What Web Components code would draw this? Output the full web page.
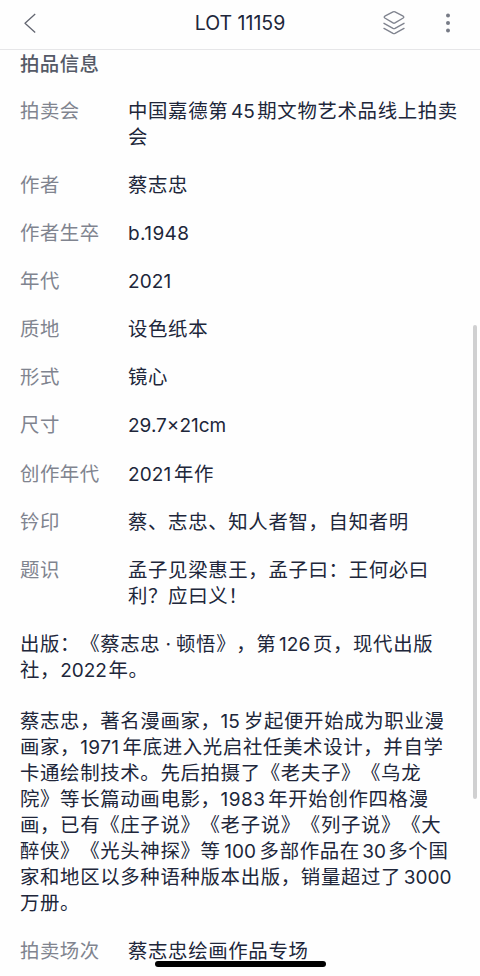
<!DOCTYPE html>
<html lang="zh-CN">
<head>
<meta charset="utf-8">
<title>LOT 11159</title>
<style>
html,body{margin:0;height:100%;overflow:hidden;background:#fefefe}
body{font-family:Inter,"Noto Sans CJK SC",sans-serif;color:#20263a}
</style>
</head>
<body>
<lot-page>
  <nav-bar slot="bar">LOT 11159</nav-bar>
  <section-title>拍品信息</section-title>
  <info-row label="拍卖会"><text-line>中国嘉德第<num-run style="--w:29px">45</num-run>期文物艺术品线上拍卖</text-line><text-line>会</text-line></info-row>
  <info-row label="作者"><text-line>蔡志忠</text-line></info-row>
  <info-row label="作者生卒"><text-line><num-run style="--w:63px;--a:left;--ls:.4px">b.1948</num-run></text-line></info-row>
  <info-row label="年代"><text-line><num-run style="--w:46.4px;--a:left;--ls:.1px">2021</num-run></text-line></info-row>
  <info-row label="质地"><text-line>设色纸本</text-line></info-row>
  <info-row label="形式"><text-line>镜心</text-line></info-row>
  <info-row label="尺寸"><text-line><num-run style="--w:100px;--a:left">29.7×21cm</num-run></text-line></info-row>
  <info-row label="创作年代"><text-line><num-run style="--w:46px;--a:left;--ls:.1px">2021</num-run>年作</text-line></info-row>
  <info-row label="钤印"><text-line>蔡、志忠、知人者智，自知者明</text-line></info-row>
  <info-row label="题识"><text-line>孟子见梁惠王，孟子曰：王何必曰</text-line><text-line>利？应曰义！</text-line></info-row>
  <text-block>
    <text-line>出版：《蔡志忠<num-run style="--w:15.6px">·</num-run>顿悟》，第<num-run style="--w:36.6px">126</num-run>页，现代出版</text-line>
    <text-line>社，<num-run style="--w:48.4px;--a:left">2022</num-run>年。</text-line>
  </text-block>
  <text-block style="margin-top:3.4px">
    <text-line>蔡志忠，著名漫画家，<num-run style="--w:23.3px;--a:left">15</num-run>岁起便开始成为职业漫</text-line>
    <text-line>画家，<num-run style="--w:42.4px;--a:left;--ls:.4px">1971</num-run>年底进入光启社任美术设计，并自学</text-line>
    <text-line>卡通绘制技术。先后拍摄了《老夫子》《乌龙</text-line>
    <text-line>院》等长篇动画电影，<num-run style="--w:47.6px;--a:left;--ls:.5px">1983</num-run>年开始创作四格漫</text-line>
    <text-line>画，已有《庄子说》《老子说》《列子说》《大</text-line>
    <text-line>醉侠》《光头神探》等<num-run style="--w:39px">100</num-run>多部作品在<num-run style="--w:28.4px">30</num-run>多个国</text-line>
    <text-line>家和地区以多种语种版本出版，销量超过了<num-run style="--w:53px">3000</num-run></text-line>
    <text-line>万册。</text-line>
  </text-block>
  <info-row label="拍卖场次"><text-line>蔡志忠绘画作品专场</text-line></info-row>
</lot-page>
<script>
function define(name, html, setup){
  const t=document.createElement('template');
  t.innerHTML=html;
  customElements.define(name, class extends HTMLElement{
    constructor(){
      super();
      this.attachShadow({mode:'open'}).appendChild(t.content.cloneNode(true));
    }
    connectedCallback(){ if(setup) setup(this); }
  });
}
define('num-run',`<style>
:host{display:inline-block;width:var(--w);text-align:var(--a,center);font-size:19px;letter-spacing:var(--ls,0);white-space:nowrap;line-height:20px}
</style><slot></slot>`);
define('text-line',`<style>
:host{display:block;height:25.95px;line-height:25.95px;white-space:nowrap;font-size:19.4px;letter-spacing:.67px;font-family:"Noto Sans CJK SC",sans-serif;text-spacing-trim:space-all;text-autospace:no-autospace}
::slotted(num-run){font-family:Inter,sans-serif}
</style><slot></slot>`);
define('text-block',`<style>
:host{display:block}
</style><slot></slot>`);
define('section-title',`<style>
:host{display:block;height:26px;font:500 19.4px/26px "Noto Sans CJK SC",sans-serif;letter-spacing:.45px;color:#555a67;margin-bottom:-1.4px}
</style><slot></slot>`);
define('info-row',`<style>
:host{display:grid;grid-template-columns:108px 1fr}
.label{color:#80848f;letter-spacing:.5px}
</style><text-line class="label"></text-line><div><slot></slot></div>`,
el=>{el.shadowRoot.querySelector('.label').textContent=el.getAttribute('label')});
define('nav-bar',`<style>
:host{display:grid;grid-template-columns:1fr auto 1fr;align-items:center;height:49px;border-bottom:1px solid #e6e6e8;box-sizing:content-box;padding:0 20px;font-size:19.5px}
.title{padding-bottom:3px;white-space:nowrap}
svg{display:block;fill:none;stroke:#626570;stroke-linejoin:round}
.actions{display:flex;justify-content:flex-end;align-items:center;gap:39px;padding:0 9px 3px 0}
.back{padding-bottom:3px}
</style>
<svg class="back" width="20" height="24" viewBox="20 11 20 24" stroke-width="1.3"><path d="M35.2 14 L25 23.3 L35.2 32.4"/></svg>
<span class="title"><slot></slot></span>
<div class="actions">
<svg width="24" height="26" viewBox="382 10 24 26" style="stroke:#80848f" stroke-width="1.4" stroke-linecap="round"><path d="M393 11.9Q394 11.4 395 11.9L403.2 16.2Q404.4 17.1 403.2 18L395 22.9Q394 23.5 393 22.9L384.8 18Q383.6 17.1 384.8 16.2ZM384 23.3L393 28.4Q394 28.9 395 28.4L404 23.3M384 28.4L393 33.4Q394 33.9 395 33.4L404 28.4"/></svg>
<svg width="6" height="22" viewBox="0 0 6 22" style="fill:#777b86;stroke:none"><circle cx="3" cy="3.5" r="2"/><circle cx="3" cy="11" r="2"/><circle cx="3" cy="18.4" r="2"/></svg>
</div>`);
define('lot-page',`<style>
:host{display:block;position:relative;height:976px;overflow:hidden;width:480px}
.content{display:flex;flex-direction:column;gap:22.2px;padding:0 20px}
.scroll{position:absolute;right:3px;top:325px;width:4px;height:474px;border-radius:2px;background:#d0d0d1}
.home{position:absolute;left:155px;top:961px;width:171px;height:6px;border-radius:3px;background:#000}
</style>
<slot name="bar"></slot><div class="content"><slot></slot></div><div class="scroll"></div><div class="home"></div>`);
</script>
</body>
</html>
